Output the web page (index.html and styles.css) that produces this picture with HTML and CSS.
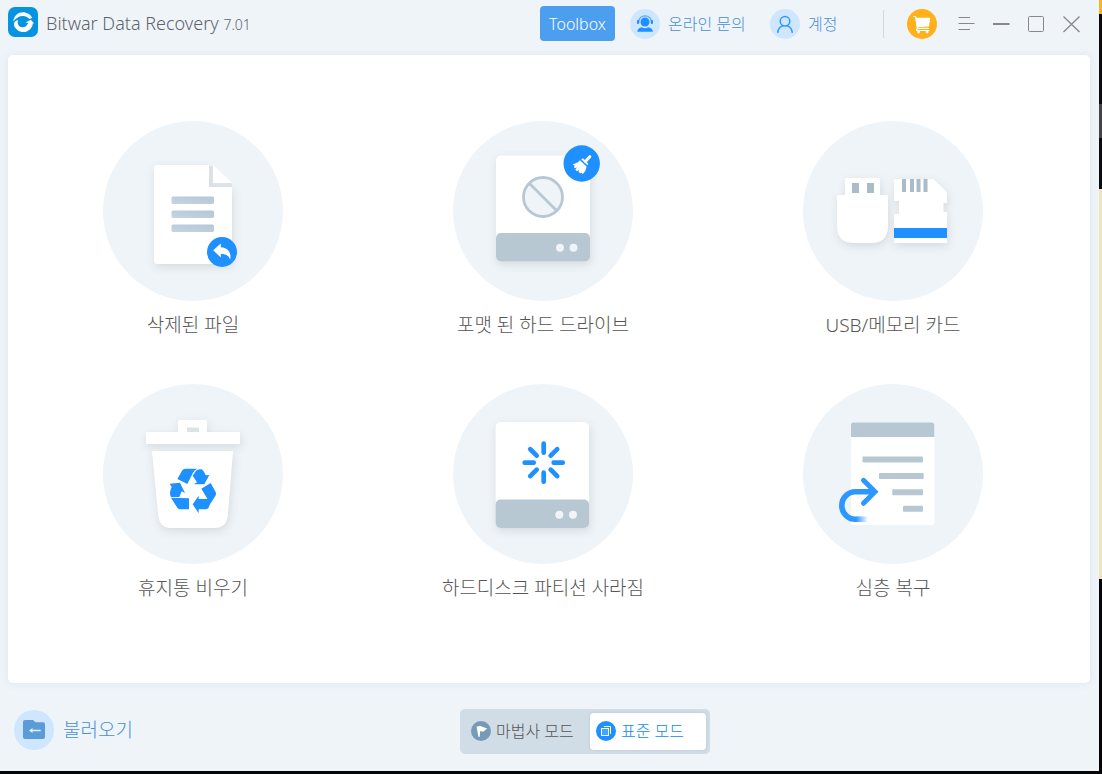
FILE: index.html
```html
<!DOCTYPE html>
<html lang="ko">
<head>
<meta charset="utf-8">
<meta name="viewport" content="width=device-width, initial-scale=1">
<title>Bitwar Data Recovery</title>
<link rel="stylesheet" href="styles.css">
</head>
<body>
<div class="desktop">
  <div class="window">
    <header class="titlebar">
      <svg class="logo" viewBox="0 0 30 30" aria-hidden="true">
        <rect width="30" height="30" rx="7" fill="#0594e2"/>
        <path d="M5.200 14.500C6 8.500 10 5.200 15 5.200c4 0 7.500 2.200 9.300 5.600L21.500 12C19.500 10 17.500 9 15 9c-4 0-7 2-9.800 5.500z" fill="#fff"/>
        <path d="M6 18.500c1.800 4 5 6.500 9 6.500 5.500 0 9.500-4 9.800-8.600l1.400.2-3.400-3.800-5.300 2.600 2.600.5c-1 3-3.500 4.600-6.100 4.300-3.500-.3-5-3.500-4-7.200C7 13.800 5.400 15.800 6 18.500z" fill="#fff"/>
      </svg>
      <h1 class="title">Bitwar Data Recovery <span class="version">7.01</span></h1>
      <nav class="actions">
        <button class="toolbox" type="button">Toolbox</button>
        <button class="link-button contact" type="button">
          <svg class="round" viewBox="0 0 30 30" aria-hidden="true">
            <circle cx="15" cy="15" r="15" fill="#cfe6ff"/>
            <circle cx="15" cy="13" r="4.500" fill="#1e90ff"/>
            <path d="M7.300 22.800c.2-2.800 1.700-4 4.700-4.500 1.800 1.300 4.200 1.300 6 0 3 .5 4.600 1.700 4.900 4.500z" fill="#1e90ff"/>
            <path d="M8.600 12.500a6.500 6.500 0 0 1 12.900 0" fill="none" stroke="#4fa5f5" stroke-width="1.300"/>
            <rect x="7" y="11" width="2.200" height="4" rx="1" fill="#1e90ff"/>
            <rect x="20.800" y="11" width="2.200" height="4" rx="1" fill="#1e90ff"/>
          </svg>
          <span>온라인 문의</span>
        </button>
        <button class="link-button account" type="button">
          <svg class="round" viewBox="0 0 30 30" aria-hidden="true">
            <circle cx="15" cy="15" r="15" fill="#cfe6ff"/>
            <g fill="none" stroke="#2b97ff" stroke-width="1.500" stroke-linecap="round">
              <circle cx="15" cy="12.300" r="4.800"/>
              <path d="M7.800 23.300c.4-3.500 2.300-5.600 4.900-6.400M22.200 23.300c-.4-3.500-2.300-5.600-4.900-6.400"/>
            </g>
          </svg>
          <span>계정</span>
        </button>
        <span class="divider"></span>
        <button class="icon-button cart" type="button" aria-label="Cart">
          <svg class="round" viewBox="0 0 30 30" aria-hidden="true">
            <circle cx="15" cy="15" r="15" fill="#ffb01a"/>
            <path d="M8.500 8.800h14.800l-1.400 8.700-12 .8z" fill="#fff"/>
            <path d="M6.300 7.500h2.200l2 11.800h11.300M10.300 19l-.6 2.500h12.600" fill="none" stroke="#fff" stroke-width="1.200"/>
            <circle cx="11.600" cy="23" r="1.400" fill="#fff"/><circle cx="20.200" cy="23" r="1.400" fill="#fff"/>
          </svg>
        </button>
        <span class="controls">
          <button class="icon-button" type="button" aria-label="Menu">
            <svg class="ctl" viewBox="0 0 17 17"><path d="M0.500 1.500h11.500M0.500 7.500h16M0.500 13.500h11.500" /></svg>
          </button>
          <button class="icon-button" type="button" aria-label="Minimize">
            <svg class="ctl" viewBox="0 0 17 17"><path d="M0 8h16.500" stroke-width="2"/></svg>
          </button>
          <button class="icon-button" type="button" aria-label="Maximize">
            <svg class="ctl" viewBox="0 0 17 17"><rect x="0.500" y="0.500" width="15" height="15" rx="1"/></svg>
          </button>
          <button class="icon-button" type="button" aria-label="Close">
            <svg class="ctl" viewBox="0 0 17 17"><path d="M0.500.5l16 15.500M16.500.5l-16 15.500" stroke-width="1.300"/></svg>
          </button>
        </span>
      </nav>
    </header>

    <main class="panel">
      <button class="tile" type="button">
        <svg class="art" viewBox="0 0 180 180" aria-hidden="true">
          <defs><linearGradient id="bar" x1="0" y1="1" x2="1" y2="0"><stop offset="0" stop-color="#c7d4e3"/><stop offset="1" stop-color="#b4c6d6"/></linearGradient></defs>
          <circle cx="90" cy="90" r="90" fill="#eff4f9"/>
          <path d="M106 45h4l19 18v4h-23z" fill="#dfe5e8"/>
          <path class="lift" d="M54 44h52v22h23v73q0 4-4 4H54q-3 0-3-4V47q0-3 3-3z" fill="#fff"/>
          <path d="M110 44l19 18h-19z" fill="#fff"/>
          <g fill="url(#bar)"><rect x="68.500" y="75.500" width="42.500" height="7.500" rx="1.500"/><rect x="68.500" y="89.500" width="42.500" height="7.500" rx="1.500"/><rect x="68.500" y="103.500" width="42.500" height="7.500" rx="1.500"/></g>
          <circle cx="119" cy="131" r="15" fill="#1e90ff"/>
          <path d="M110.200 129.200l7.600-6.600v3.700c6.800.2 10.800 5 9.400 12.200-1.500-3.800-4.200-5.500-9.400-5.500v3.500z" fill="#fff"/>
        </svg>
        <span class="label">삭제된 파일</span>
      </button>

      <button class="tile" type="button">
        <svg class="art" viewBox="0 0 180 180" aria-hidden="true">
          <circle cx="90" cy="90" r="90" fill="#eff4f9"/>
          <rect class="lift" x="43" y="34.500" width="94" height="106" rx="5" fill="#fff"/>
          <rect x="43" y="112" width="94" height="28.500" rx="5" fill="#b8c8d2"/>
          <circle cx="107" cy="126.700" r="4" fill="#eff4f9"/><circle cx="120.500" cy="126.700" r="4" fill="#eff4f9"/>
          <circle cx="90" cy="76" r="19.500" fill="#eff4f9" stroke="#b8c8d2" stroke-width="2.800"/>
          <path d="M76.500 62.500l27 27" stroke="#b8c8d2" stroke-width="2.800"/>
          <circle cx="128.700" cy="42.500" r="18.200" fill="#1e90ff"/>
          <path d="M136.800 35.700l-4.500 4.800" stroke="#fff" stroke-width="3" stroke-linecap="round"/>
          <path d="M128.200 38.300l1.700-1 5.300 5.300-.8 1.700z" fill="#fff"/>
          <path d="M127 39.200l6.500 6.300c-.3 3-1.500 5.500-3.900 7.500l-1.300-1.400-.7 1-2-1.600.4-2-2 1.300-1.700-1.600 1.500-2.200-2.200.8-.7-1.900 1.300-.5-2.800-1.600c2.800-.5 5.300-1.500 7.600-4.100z" fill="#fff"/>
        </svg>
        <span class="label">포맷 된 하드 드라이브</span>
      </button>

      <button class="tile" type="button">
        <svg class="art" viewBox="0 0 180 180" aria-hidden="true">
          <circle cx="90" cy="90" r="90" fill="#eff4f9"/>
          <path class="lift" d="M42 58q0-1 1-1h33q1 0 1 1v16h8v31q0 17-17 17H51q-17 0-17-17V74h8z" fill="#fff"/>
          <path d="M49 62h7v10h-7zM64 62h7v10h-7z" fill="#aabcc7"/>
          <path class="lift" d="M92 58h38.500L144 71v11h-3.500v9h3.500v31H91V93h5V80h-5V59z" fill="#fff"/>
          <path d="M99 58h4v13h-4zM107 58h4v13h-4zM113.500 58h4v13h-4zM120.500 58h4v13h-4z" fill="#aabcc7"/>
          <path d="M91 107h53v10H91z" fill="#1e90ff"/>
        </svg>
        <span class="label">USB/메모리 카드</span>
      </button>

      <button class="tile" type="button">
        <svg class="art" viewBox="0 0 180 180" aria-hidden="true">
          <circle cx="90" cy="90" r="90" fill="#eff4f9"/>
          <path class="lift" d="M43 48h32V38q0-2 2-2h25q2 0 2 2v10h33v12H43z" fill="#fff"/>
          <path d="M84 43.500h12V48H84z" fill="#dce3e6"/>
          <path class="lift" d="M49 67h81l-5 63q-1 14-13 14H68q-12 0-13-14z" fill="#fff"/>
          <g transform="translate(-3 -4) scale(.33333)" fill="#1e90ff">
            <path d="M232 297l15-26q3-5 9-5h36q-8 3-13 12l-17 34z"/>
            <path d="M278 287l10-15q6-6 16-4 6 1 13 18l11-1-15 28h-31l9-6z"/>
            <path d="M304 326l28-17 15 27q3 6-1 12l-18 28-4-17z"/>
            <path d="M278 373l18-26v10h31q2 7 2 17-3 14-13 14h-20v12z"/>
            <path d="M213 353l54 2v33h-27q-6 0-9-6z"/>
            <path d="M209 311l31-3 15 31-10-5-7 17h-25q-7-10 2-30z"/>
          </g>
        </svg>
        <span class="label">휴지통 비우기</span>
      </button>

      <button class="tile" type="button">
        <svg class="art" viewBox="0 0 180 180" aria-hidden="true">
          <circle cx="90" cy="90" r="90" fill="#eff4f9"/>
          <rect class="lift" x="42.600" y="38" width="93.500" height="106" rx="5" fill="#fff"/>
          <rect x="42.600" y="115.500" width="93.500" height="28.500" rx="5" fill="#b8c8d2"/>
          <circle cx="106.300" cy="130.700" r="4" fill="#eff4f9"/><circle cx="120" cy="130.700" r="4" fill="#eff4f9"/>
          <g transform="translate(90.700 78.700)" stroke="#1e90ff" stroke-width="4.700" stroke-linecap="round">
            <path d="M0-10v-9M0 10v9M-10 0h-9M10 0h9M7-7l6.500-6.500M-7-7l-6.500-6.500M7 7l6.500 6.500M-7 7l-6.500 6.500"/>
          </g>
        </svg>
        <span class="label">하드디스크 파티션 사라짐</span>
      </button>

      <button class="tile" type="button">
        <svg class="art" viewBox="0 0 180 180" aria-hidden="true">
          <defs><linearGradient id="tail" gradientUnits="userSpaceOnUse" x1="53" y1="0" x2="65" y2="0"><stop offset="0" stop-color="#2b97ff"/><stop offset="1" stop-color="#2b97ff" stop-opacity="0"/></linearGradient></defs>
          <circle cx="90" cy="90" r="90" fill="#eff4f9"/>
          <rect x="48" y="40" width="83.300" height="101" rx="2" fill="#fff"/>
          <path d="M48 53V41q0-2.500 2.500-2.500H129q2.300 0 2.300 2.500v12z" fill="#b8c8d2"/>
          <g fill="#b8c8d2"><rect x="59.500" y="72.500" width="60.500" height="6" rx="1"/><rect x="76" y="89" width="44.700" height="6" rx="1"/><rect x="89.300" y="105.300" width="30.700" height="6" rx="1"/><rect x="100" y="121.800" width="20" height="6" rx="1"/></g>
          <g fill="none" stroke-width="5.600">
            <path d="M53 135.200h14" stroke="url(#tail)"/>
            <path d="M53 135.200h-.5a13.700 13.700 0 0 1 0-27.400H71" stroke="#2b97ff"/>
            <path d="M60.500 96.300l11.500 11.500-11.500 11.500" stroke="#2b97ff" stroke-width="5" stroke-linecap="round"/>
          </g>
        </svg>
        <span class="label">심층 복구</span>
      </button>
    </main>

    <footer class="footer">
      <button class="load" type="button">
        <svg class="load-icon" viewBox="0 0 40 40" aria-hidden="true">
          <circle cx="20" cy="20" r="20" fill="#cfe6ff"/>
          <path d="M9 12q0-2 2-2h8l2.500 2.200H29q2 0 2 2V27q0 2-2 2H11q-2 0-2-2z" fill="#5b9bd8"/>
          <path d="M15 20.500l3.500-2.600v1.800h8.200v1.600h-8.200v1.800z" fill="#e4f1ff"/>
        </svg>
        <span>불러오기</span>
      </button>
      <div class="modes" role="group">
        <button class="mode" type="button">
          <svg class="mode-icon" viewBox="0 0 20 20" aria-hidden="true">
            <circle cx="10" cy="10" r="10" fill="#789ab7"/>
            <path d="M5.600 5.700c3-1.500 4.500-.6 6.300.2l4.400 1.700-4.200 3.200-2.900-.7-.6 5.900-1.200-.3z" fill="#fff"/>
          </svg>
          <span>마법사 모드</span>
        </button>
        <button class="mode selected" type="button" aria-pressed="true">
          <svg class="mode-icon" viewBox="0 0 20 20" aria-hidden="true">
            <circle cx="10" cy="10" r="10" fill="#1e90ff"/>
            <rect x="5.500" y="7.500" width="7" height="7" fill="#45a4ff" stroke="#fff"/>
            <path d="M7.800 5.500h6.700v7.300" fill="none" stroke="#fff"/>
          </svg>
          <span>표준 모드</span>
        </button>
      </div>
    </footer>
  </div>
  <div class="backdrop"></div>
</div>
</body>
</html>
```
FILE: styles.css
```css
* {
  box-sizing: border-box;
}

body {
  margin: 0;
  font-family: "Noto Sans", "Noto Sans CJK KR", sans-serif;
  font-weight: 300;
  color: #555;
  background: #050505;
}

button {
  font: inherit;
  color: inherit;
  border: 0;
  padding: 0;
  background: none;
  cursor: pointer;
}

svg {
  display: block;
  flex: none;
}

.desktop {
  display: grid;
  grid-template-columns: 1fr 3px;
  min-height: 100vh;
  padding-bottom: 3px;
}

.window {
  display: flex;
  flex-direction: column;
  background: #eff4f9;
}

.backdrop {
  background: linear-gradient(#efb52b 0 14px, #0b0b0b 14px 104px, #444 104px 138px, #0b0b0b 138px 189px, #efe4bd 189px 579px, #050505 579px);
}

.titlebar {
  display: flex;
  align-items: center;
  height: 55px;
  padding: 0 19px 8px 8px;
}

.logo {
  width: 30px;
  height: 30px;
  margin-bottom: 4px;
}

.title {
  margin: 0 0 0 8px;
  font-size: 18px;
  font-weight: 300;
  line-height: 24px;
  color: #5c646c;
  white-space: nowrap;
}

.version {
  font-size: 14px;
}

.actions {
  display: flex;
  align-items: center;
  margin-left: auto;
  font-size: 16px;
  line-height: 24px;
  color: #4a90d4;
  white-space: nowrap;
}

.toolbox {
  width: 75px;
  height: 35px;
  border-radius: 4px;
  background: #4b9fee;
  color: #fff;
}

.link-button {
  display: flex;
  align-items: center;
  gap: 8px;
  text-align: left;
}

.contact {
  width: 118px;
  margin-left: 15px;
}

.account {
  width: 68px;
  margin-left: 22px;
}

.round {
  width: 30px;
  height: 30px;
}

.divider {
  width: 1px;
  height: 28px;
  margin: 0 23px 0 45px;
  background: #d5dadf;
}

.controls {
  display: flex;
  gap: 18px;
  margin-left: 21px;
  padding-top: 1px;
}

.ctl {
  width: 17px;
  height: 17px;
  fill: none;
  stroke: #888;
}

.panel {
  flex: 1;
  display: grid;
  grid-template-columns: repeat(3, 1fr);
  align-content: start;
  row-gap: 44px;
  margin: 0 9px 0 8px;
  padding: 66px 22px 40px 10px;
  border-radius: 5px;
  background: #fff;
  box-shadow: 0 0 8px #dbe5ef;
}

.tile {
  display: flex;
  flex-direction: column;
  align-items: center;
  gap: 9px;
}

.art {
  width: 180px;
  height: 180px;
}

.lift {
  filter: drop-shadow(1px 3px 4px #d5dade);
}

.label {
  font-size: 19px;
  line-height: 30px;
}

.footer {
  display: flex;
  align-items: center;
  height: 88px;
  padding: 0 14px 0 14px;
}

.load {
  display: flex;
  flex: 0 0 446px;
  align-items: center;
  gap: 9px;
  padding-top: 6px;
  font-size: 19px;
  line-height: 26px;
  color: #4a90d4;
}

.load-icon {
  width: 40px;
  height: 40px;
}

.modes {
  display: flex;
  width: 250px;
  margin-top: 8px;
  padding: 4px;
  border-radius: 5px;
  background: #d0dce6;
  font-size: 16px;
  line-height: 22px;
  white-space: nowrap;
}

.mode {
  display: flex;
  align-items: center;
  flex: 0 0 126px;
  height: 37px;
  gap: 5px;
  padding-left: 7px;
}

.mode.selected {
  flex: 0 0 116px;
  padding-left: 6px;
  border-radius: 4px;
  background: #fff;
  color: #0d8fe8;
  box-shadow: 0 0 3px #b8c9dc;
}

.mode-icon {
  width: 20px;
  height: 20px;
}
```
